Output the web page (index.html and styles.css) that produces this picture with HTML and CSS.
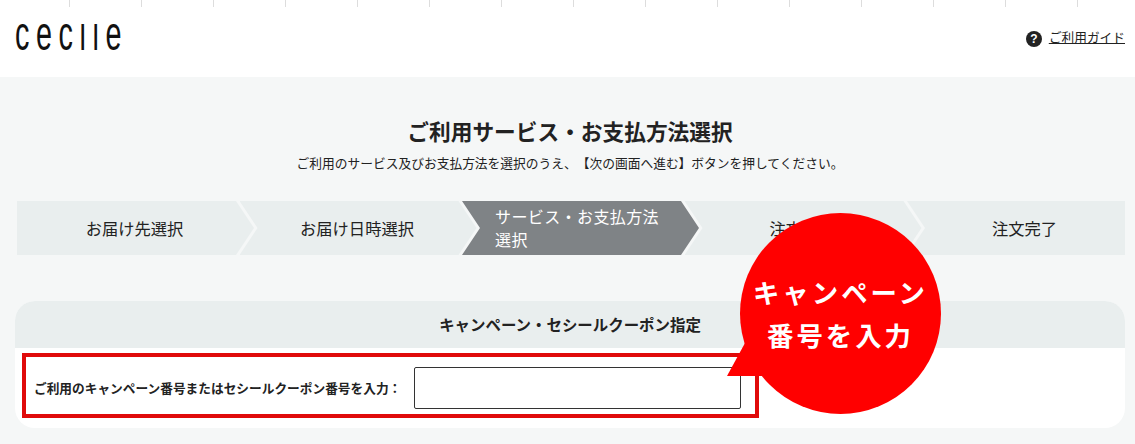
FILE: index.html
```html
<!DOCTYPE html>
<html lang="ja">
<head>
    <meta charset="UTF-8">
    <meta name="viewport" content="width=device-width, initial-scale=1.0">
    <title>ご利用サービス・お支払方法選択</title>
    <link rel="stylesheet" href="styles.css">
</head>
<body>
    <header class="site-header">
        <a class="logo" href="#"><span class="logo-text">cecile</span></a>
        <a class="guide-link" href="#">
            <span class="guide-icon">?</span>
            <span class="guide-text">ご利用ガイド</span>
        </a>
    </header>

    <main class="main">
        <h1 class="page-title">ご利用サービス・お支払方法選択</h1>
        <p class="page-lead">ご利用のサービス及びお支払方法を選択のうえ、【次の画面へ進む】ボタンを押してください。</p>

        <ol class="steps">
            <li class="step step-first">お届け先選択</li>
            <li class="step">お届け日時選択</li>
            <li class="step step-current">サービス・お支払方法選択</li>
            <li class="step">注文確認</li>
            <li class="step step-last">注文完了</li>
        </ol>

        <section class="card">
            <h2 class="card-title">キャンペーン・セシールクーポン指定</h2>
            <div class="card-body">
                <div class="campaign-row">
                    <label class="campaign-label" for="campaignNo">ご利用のキャンペーン番号またはセシールクーポン番号を入力：</label>
                    <input class="campaign-input" type="text" id="campaignNo">
                </div>
            </div>
        </section>
    </main>

    <!-- Annotation balloon over the page -->
    <div class="balloon">
        <svg class="balloon-shape" width="214" height="201" viewBox="0 0 214 201">
            <circle cx="113.5" cy="100.5" r="100.5" fill="#ff0000"/>
            <polygon points="18,130 0,163 40,163" fill="#ff0000"/>
        </svg>
        <p class="balloon-text">キャンペーン<br>番号を入力</p>
    </div>
</body>
</html>
```

FILE: styles.css
```css
/* General */
body {
    margin: 0;
    background: #f5f7f7;
    color: #222;
    font-family: "Noto Sans CJK JP", "Noto Sans", sans-serif;
    text-spacing-trim: space-all;
}

a {
    color: inherit;
}

/* Header */
.site-header {
    display: flex;
    justify-content: space-between;
    align-items: center;
    height: 77px;
    padding: 0 10px 0 15px;
    background: #fff linear-gradient(to right, #ddd 1px, transparent 1px) 69px 0 / 72px 7px repeat-x;
}

.logo {
    display: block;
    width: 106px;
    height: 27px;
    margin-top: -2px;
    clip-path: inset(0);
    text-decoration: none;
}

.logo-text {
    display: block;
    font-family: "Liberation Sans", sans-serif;
    font-size: 48px;
    line-height: 19px;
    letter-spacing: 11px;
    color: #111;
    transform: scaleX(0.6);
    transform-origin: left top;
    white-space: nowrap;
}

.guide-link {
    display: flex;
    align-items: center;
    gap: 7px;
    font-size: 12.7px;
}

.guide-icon {
    display: flex;
    justify-content: center;
    align-items: center;
    width: 16px;
    height: 16px;
    border-radius: 50%;
    background: #222;
    color: #fff;
    font-family: "Liberation Sans", sans-serif;
    font-size: 12px;
    font-weight: 700;
}

.guide-text {
    margin-bottom: 4px;
    text-decoration: underline;
}

/* Title */
.main {
    padding: 40px 10px 16px 15px;
}

.page-title {
    margin: 0;
    font-size: 21.7px;
    font-weight: 700;
    line-height: 28px;
    text-align: center;
}

.page-lead {
    margin: 8px 0 0;
    font-size: 12.74px;
    line-height: 20px;
    text-align: center;
}

/* Steps */
.steps {
    display: flex;
    height: 54px;
    margin: 28px 0 46px 2px;
    padding: 0;
    list-style: none;
}

.step {
    display: flex;
    flex: none;
    justify-content: center;
    align-items: center;
    box-sizing: border-box;
    width: 237px;
    margin-right: -14.5px;
    padding: 0 20px 0 18px;
    background: #e9eeee;
    font-size: 16.3px;
    line-height: 23px;
    clip-path: polygon(0 0, 219px 0, 237px 50%, 219px 100%, 0 100%, 18px 50%);
}

.step-first {
    clip-path: polygon(0 0, 219px 0, 237px 50%, 219px 100%, 0 100%);
}

.step-last {
    width: 218px;
    margin-right: 0;
    padding: 0 18px 0 35px;
    clip-path: polygon(0 0, 100% 0, 100% 100%, 0 100%, 18px 50%);
}

.step-current {
    justify-content: flex-start;
    padding: 0 36px 0 33px;
    background: #7f8386;
    color: #fff;
    font-size: 16px;
    letter-spacing: 0.4px;
}

/* Campaign card */
.card {
    border-radius: 20px;
    overflow: hidden;
    background: #fff;
}

.card-title {
    margin: 0;
    padding-bottom: 1px;
    background: #e9eeee;
    font-size: 15.45px;
    font-weight: 700;
    line-height: 46px;
    text-align: center;
}

.card-body {
    box-sizing: border-box;
    height: 80px;
    padding: 5px 7px 0;
}

.campaign-row {
    display: flex;
    align-items: center;
    box-sizing: border-box;
    width: 737px;
    height: 65px;
    padding: 4px 14px 0 8px;
    border: 4px solid #e00a0a;
}

.campaign-label {
    flex: 1;
    font-size: 12.7px;
    font-weight: 700;
}

.campaign-input {
    box-sizing: border-box;
    width: 327px;
    height: 42px;
    border: 1px solid #333;
    border-radius: 2px;
    background: #fff;
}

/* Balloon */
.balloon {
    position: absolute;
    top: 213px;
    left: 727px;
    width: 214px;
    height: 201px;
}

.balloon-shape {
    position: absolute;
    top: 0;
    left: 0;
}

.balloon-text {
    position: relative;
    margin: 0;
    padding: 57px 0 0 13px;
    color: #fff;
    font-size: 26.4px;
    font-weight: 700;
    line-height: 43px;
    letter-spacing: 3px;
    text-align: center;
}
```
